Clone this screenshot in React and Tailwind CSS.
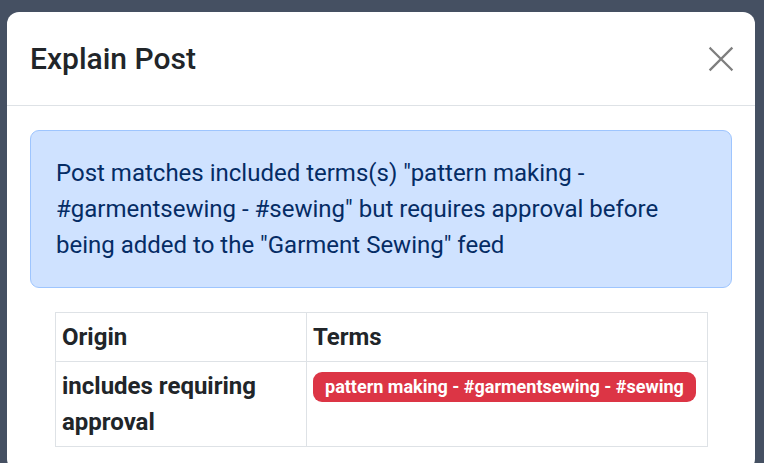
export default function App() {
  return (
    <div className="min-h-[463px] bg-[#455062] pt-[12px] pl-[7px] overflow-hidden" style={{ fontFamily: 'Roboto, "Liberation Sans", sans-serif' }}>
      <div className="w-[748px] bg-white rounded-[12px] text-[#212529]">
        <div className="flex items-center justify-between pl-[24px] pr-[16px] py-[24px] border-b border-[#dee2e6]">
          <h5 className="text-[30px] font-medium leading-[45px] m-0 -ml-[1px]">Explain Post</h5>
          <button className="w-[36px] h-[36px] flex items-center justify-center opacity-50">
            <svg width="26" height="26" viewBox="0 0 16 16">
              <path d="M1.5 1.5 L14.5 14.5 M14.5 1.5 L1.5 14.5" stroke="#000" strokeWidth="1.4" strokeLinecap="square" />
            </svg>
          </button>
        </div>
        <div className="py-[24px] pl-[23px] pr-[23px]">
          <div className="bg-[#cfe2ff] border border-[#9ec5fe] rounded-[9px] text-[#052c65] text-[24px] leading-[36px] px-[25px] py-[24px]">
            Post matches included terms(s) "pattern making - #garmentsewing - #sewing" but requires approval before being added to the "Garment Sewing" feed
          </div>
          <div className="mt-[24px] pl-[25px] pr-[24px]">
            <table className="w-full border-collapse border border-[#dee2e6] text-[24px] leading-[36px]">
              <thead>
                <tr>
                  <th className="w-[251px] text-left font-bold border border-[#dee2e6] px-[6px] py-[6px] align-top">Origin</th>
                  <th className="text-left font-bold border border-[#dee2e6] px-[6px] py-[6px] align-top">Terms</th>
                </tr>
              </thead>
              <tbody>
                <tr>
                  <th className="text-left font-bold border border-[#dee2e6] px-[6px] py-[6px] align-top">includes requiring approval</th>
                  <td className="border border-[#dee2e6] px-[6px] py-[6px] align-top">
                    <span className="inline-block bg-[#dc3545] text-white font-bold text-[18px] leading-[18px] px-[12px] py-[6px] rounded-[9px] align-middle relative -top-[1px]">
                      pattern making - #garmentsewing - #sewing
                    </span>
                  </td>
                </tr>
              </tbody>
            </table>
          </div>
        </div>
      </div>
    </div>
  )
}
